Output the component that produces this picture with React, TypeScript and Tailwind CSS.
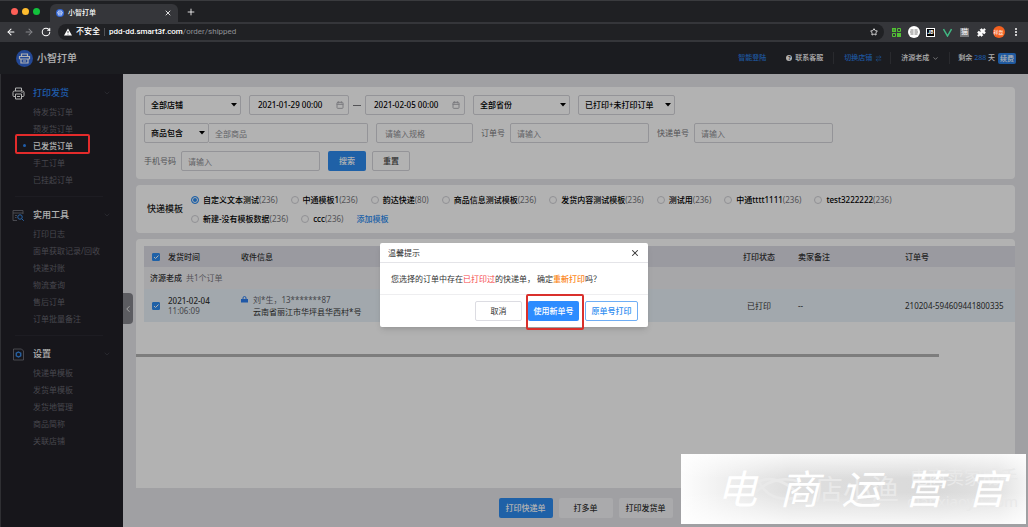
import type { ReactNode } from 'react';
import { ArrowLeft, ArrowRight, Calendar, ChevronDown, ChevronLeft, Plus, Puzzle, RotateCw, Star, X, ArrowRightLeft } from 'lucide-react';

interface MenuGroup {
  title: string;
  icon: ReactNode;
  active?: boolean;
  items: string[];
}

interface SelectBoxProps {
  label: string;
  options: string[];
  className: string;
}

interface TextBoxProps {
  id: string;
  label: string;
  placeholder: string;
  className: string;
}

const PrinterIcon = () => (
  <svg width="13" height="13" viewBox="0 0 26 26" fill="none" stroke="#fff" strokeWidth="2">
    <path d="M7 8V2h12v6M7 19H4a2 2 0 0 1-2-2v-6a3 3 0 0 1 3-3h16a3 3 0 0 1 3 3v6a2 2 0 0 1-2 2h-3" />
    <path d="M7 14h12v10H7zM10 19h6M19 11h2" />
  </svg>
);

const ToolsIcon = () => (
  <svg width="13" height="13" viewBox="0 0 26 26" fill="none" stroke="#7b7b84" strokeWidth="1.6">
    <path d="M10 23H2V3h20v7M2 8h20M6 13h4M6 17h3" />
    <g stroke="#3a90f0" strokeWidth="2">
      <circle cx="16" cy="16" r="4.5" />
      <path d="m19.5 19.5 4 4" />
    </g>
  </svg>
);

const SettingsIcon = () => (
  <svg width="13" height="13" viewBox="0 0 26 26" fill="none" stroke="#7b7b84" strokeWidth="1.6">
    <path d="M3 2h16l4 4v18H3z" />
    <path d="m13 8 4.500 2.500v5L13 18l-4.500-2.500v-5z" stroke="#3a90f0" strokeWidth="2.6" />
  </svg>
);

const Logo = ({ className }: { className: string }) => (
  <svg className={className} viewBox="0 0 34 34">
    <circle cx="17" cy="17" r="17" fill="#3367d6" />
    <g fill="none" stroke="#fff" strokeWidth="2.4">
      <path d="M11 12V8h12v4M7 18v-5h20v5M10 18h14v8H10zM7 18h3M24 18h3M14 22h6" />
    </g>
  </svg>
);

const MENU: MenuGroup[] = [
  { title: '打印发货', icon: <PrinterIcon />, active: true, items: ['待发货订单', '预发货订单', '已发货订单', '手工订单', '已挂起订单'] },
  { title: '实用工具', icon: <ToolsIcon />, items: ['打印日志', '面单获取记录/回收', '快递对账', '物流查询', '售后订单', '订单批量备注'] },
  { title: '设置', icon: <SettingsIcon />, items: ['快递单模板', '发货单模板', '发货地管理', '商品简称', '关联店铺'] },
];

const CURRENT = '已发货订单';

const TEMPLATES = [
  [
    { name: '自定义文本测试', count: 236 },
    { name: '中通模板1', count: 236 },
    { name: '韵达快递', count: 80 },
    { name: '商品信息测试模板', count: 236 },
    { name: '发货内容测试模板', count: 236 },
    { name: '测试用', count: 236 },
    { name: '中通tttt1111', count: 236 },
    { name: 'test3222222', count: 236 },
  ],
  [
    { name: '新建-没有模板数据', count: 236 },
    { name: 'ccc', count: 236 },
  ],
];

const SelectBox = ({ label, options, className }: SelectBoxProps) => (
  <div className={`relative h-5 shrink-0 ${className}`}>
    <select aria-label={label} className="h-full w-full appearance-none rounded-xs border border-[#d4d4da] bg-transparent pl-1.5 font-medium text-black">
      {options.map((option) => (
        <option key={option}>{option}</option>
      ))}
    </select>
    <svg className="pointer-events-none absolute top-2 right-1 h-1 w-1.5" viewBox="0 0 6 4">
      <path d="M0 0h6L3 3.500z" fill="#000" />
    </svg>
  </div>
);

const DateBox = ({ label, value }: { label: string; value: string }) => (
  <div className="flex h-5 w-[100px] shrink-0 items-center rounded-xs border border-[#d4d4da] px-1">
    <input aria-label={label} defaultValue={value} className="w-full min-w-0 bg-transparent pl-1 font-medium text-black outline-none" />
    <Calendar className="size-2 shrink-0 text-[#b0b0b6]" strokeWidth={3} />
  </div>
);

const TextBox = ({ id, label, placeholder, className }: TextBoxProps) => (
  <div className="flex items-center gap-[5px]">
    <label htmlFor={id} className="whitespace-nowrap text-[#77777c]">{label}</label>
    <input id={id} placeholder={placeholder} className={`h-5 rounded-xs border border-[#d4d4da] px-1.5 placeholder:text-[#8e8e94] ${className}`} />
  </div>
);

const BrowserBar = () => (
  <div className="bg-[#1f2023] font-[Roboto,'Noto_Sans_CJK_SC',sans-serif] text-white">
    <div className="flex h-[22px] items-center border-t border-[#3a3b3e] pl-[11px]">
      <div className="flex gap-1">
        <span className="size-[7px] rounded-full bg-[#fe5f57]" />
        <span className="size-[7px] rounded-full bg-[#febc2e]" />
        <span className="size-[7px] rounded-full bg-[#12c23c]" />
      </div>
      <div className="ml-[10px] flex h-[18px] w-32 items-center self-end rounded-t-md bg-[#35363a] px-1.5">
        <Logo className="size-2" />
        <span className="ml-1 flex-1 text-[7px] font-medium">小智打单</span>
        <button aria-label="关闭标签页"><X className="size-2" strokeWidth={2.5} /></button>
      </div>
      <button aria-label="新标签页" className="ml-2"><Plus className="size-2.5" /></button>
    </div>
    <div className="flex h-5 items-center bg-[#35363a] pr-1 pl-1.5">
      <button aria-label="后退"><ArrowLeft className="size-2.5" strokeWidth={2.5} /></button>
      <button aria-label="前进" className="ml-2 text-[#85868a]"><ArrowRight className="size-2.5" strokeWidth={2.5} /></button>
      <button aria-label="刷新" className="ml-[7px]"><RotateCw className="size-2.5" strokeWidth={2.5} /></button>
      <div className="ml-[7px] flex h-4 min-w-0 flex-1 items-center rounded-full bg-[#202124] px-1.5 text-[8px]">
        <svg className="size-2 shrink-0" viewBox="0 0 16 16">
          <path d="M8 1 16 15H0z" fill="#fff" />
          <path d="M8 6v4M8 11.500v1.500" stroke="#202124" strokeWidth="1.600" />
        </svg>
        <span className="ml-1 border-r border-[#505155] pr-1 leading-[8px] font-medium whitespace-nowrap">不安全</span>
        <span className="ml-1 flex-1 truncate text-[#8f9094]"><span className="font-medium text-white">pdd-dd.smart3f.com</span>/order/shipped</span>
        <button aria-label="收藏"><Star className="size-2" strokeWidth={2.5} /></button>
      </div>
      <div className="ml-1 grid auto-cols-[17px] grid-flow-col items-center justify-items-center">
        <svg className="size-[9px]" viewBox="0 0 18 18">
          <path d="M0 0h8v8H0zM10 10h8v8h-8z" fill="#52c234" />
          <path d="M11 1h6v6h-6zM1 11h6v6H1z" fill="none" stroke="#52c234" strokeWidth="2" />
          <path d="M3 3h2v2H3z" fill="#1f2023" />
        </svg>
        <svg className="size-3" viewBox="0 0 24 24">
          <circle cx="12" cy="12" r="12" fill="#fff" />
          <path d="M5 8h6M13 8h6M4 12h7M13 12h7M5 16h6M13 16h6" stroke="#555" strokeWidth="1.600" />
        </svg>
        <span className="flex size-[9px] items-start justify-center border border-white bg-black text-[5px] leading-[6px] font-bold">JB</span>
        <svg className="size-[9px]" viewBox="0 0 18 18">
          <path d="m1 2 8 14 8-14" fill="none" stroke="#41b883" strokeWidth="3" />
        </svg>
        <span className="flex size-[9px] items-center justify-center bg-[#77787b] text-[7px] leading-[9px]">猫</span>
        <Puzzle className="size-[9px]" fill="#fff" />
        <span className="flex size-3 items-center justify-center rounded-full bg-[#f4601f] text-[5px] leading-[12px]">祥磊</span>
        <svg className="size-2" viewBox="0 0 8 8" fill="#fff">
          <circle cx="4" cy="1" r="1" />
          <circle cx="4" cy="4" r="1" />
          <circle cx="4" cy="7" r="1" />
        </svg>
      </div>
    </div>
  </div>
);

const Header = () => (
  <header className="flex h-8 items-center bg-[#28292f] pr-3 pl-4 text-white">
    <Logo className="size-[17px]" />
    <h1 className="ml-1 text-[10px] font-medium">小智打单</h1>
    <nav className="ml-auto flex items-center text-[7px] font-medium whitespace-nowrap">
      <a href="#login" className="text-[#2b7de0]">智能登陆</a>
      <a href="#service" className="ml-5 flex items-center gap-[3px]">
        <span className="flex size-1.5 items-center justify-center rounded-full bg-white text-[5px] leading-[6px] font-bold text-[#28292f]">?</span>
        联系客服
      </a>
      <a href="#shops" className="ml-2.5 flex items-center gap-[3px] border-l border-[#3c3d43] pl-2.5 text-[#2b7de0]">
        切换店铺
        <ArrowRightLeft className="size-[7px]" />
      </a>
      <button className="ml-2 flex items-center gap-[3px] border-l border-[#3c3d43] pl-2.5">
        济源老成
        <ChevronDown className="size-[7px]" />
      </button>
      <span className="ml-2.5 border-l border-[#3c3d43] pl-2">剩余 <span className="text-[#2b7de0]">288</span> 天</span>
      <button className="ml-[3px] h-[11px] rounded-xs bg-[#2c80e4] px-[2px] leading-[11px]">续费</button>
    </nav>
  </header>
);

const Sidebar = () => (
  <aside className="relative w-[123px] shrink-0 border-l border-[#44444a] bg-[#212027] pt-[9px]">
    {MENU.map((group, index) => (
      <section key={group.title}>
        {index > 0 && <hr className="my-2 ml-3.5 w-22 border-[#2a2932]" />}
        <h2 className="flex h-5 items-center pr-3 pl-[11px] text-[9px] font-medium text-white">
          {group.icon}
          <span className={`ml-2 flex-1 ${group.active ? 'text-[#2d86f5]' : ''}`}>{group.title}</span>
          <ChevronDown className="size-2 text-[#46454f]" />
        </h2>
        <ul>
          {group.items.map((item) => (
            <li key={item} className="relative flex h-[17px] items-center pl-8">
              {item === CURRENT && (
                <>
                  <span className="absolute left-[22px] size-[3px] rounded-full bg-[#2d86f5]" />
                  <span className="absolute -top-[3px] left-[14px] z-20 h-5 w-[75px] rounded-xs border-2 border-[#e32b2b]" />
                </>
              )}
              <a href="#menu" className={item === CURRENT ? 'font-medium text-white' : 'text-[#67666f]'}>{item}</a>
            </li>
          ))}
        </ul>
      </section>
    ))}
    <button aria-label="收起菜单" className="absolute top-[219px] left-full flex h-[31px] w-2.5 items-center justify-center rounded-r-sm bg-[#85858c] text-white">
      <ChevronLeft className="size-2.5" />
    </button>
  </aside>
);

const Filters = () => (
  <form className="flex flex-col gap-2 rounded-sm bg-white p-2" onSubmit={(e) => e.preventDefault()}>
    <div className="flex items-center gap-2">
      <SelectBox label="店铺" options={['全部店铺']} className="w-[97px]" />
      <div className="flex items-center gap-1">
        <DateBox label="开始时间" value="2021-01-29 00:00" />
        <span className="h-px w-2 bg-[#77777c]" />
        <DateBox label="结束时间" value="2021-02-05 00:00" />
      </div>
      <SelectBox label="省份" options={['全部省份']} className="w-[97px]" />
      <SelectBox label="打印状态" options={['已打印+未打印订单']} className="w-[97px]" />
    </div>
    <div className="flex items-center gap-2">
      <div className="flex">
        <SelectBox label="商品条件" options={['商品包含']} className="w-[65px]" />
        <input aria-label="商品" placeholder="全部商品" className="h-5 w-[159px] rounded-r-xs border border-l-0 border-[#d4d4da] px-1.5 placeholder:text-[#8e8e94]" />
      </div>
      <input aria-label="规格" placeholder="请输入规格" className="h-5 w-[97px] rounded-xs border border-[#d4d4da] px-2 placeholder:text-[#8e8e94]" />
      <TextBox id="order" label="订单号" placeholder="请输入" className="w-[139px]" />
      <TextBox id="express" label="快递单号" placeholder="请输入" className="w-[139px]" />
    </div>
    <div className="flex items-center gap-2">
      <TextBox id="phone" label="手机号码" placeholder="请输入" className="w-[139px]" />
      <div className="flex gap-1.5">
        <button className="h-5 w-[38px] rounded-xs bg-[#2d8cf0] font-medium text-white">搜索</button>
        <button type="reset" className="h-5 w-[38px] rounded-xs border border-[#d4d4da] font-medium text-[#444]">重置</button>
      </div>
    </div>
  </form>
);

const Templates = () => (
  <div role="radiogroup" aria-labelledby="template-title" className="flex h-12 items-center rounded-sm bg-white pl-[11px]">
    <span id="template-title" className="w-11 shrink-0 text-[9px] font-medium whitespace-nowrap text-[#222]">快递模板</span>
    <div className="flex flex-col gap-[7px]">
      {TEMPLATES.map((row, index) => (
        <div key={index} className="flex h-3 items-center gap-[13px] whitespace-nowrap">
          {row.map(({ name, count }) => (
            <label key={name} className="flex items-center gap-1">
              <input
                type="radio"
                name="template"
                defaultChecked={name === '自定义文本测试'}
                className="size-2 appearance-none rounded-full border border-[#d0d0d6] checked:border-[#2d8cf0] checked:bg-[#2d8cf0] checked:shadow-[inset_0_0_0_1px_#fff]"
              />
              <span className="text-[#77777c]"><span className="font-medium text-black">{name}</span>({count})</span>
            </label>
          ))}
          {index === 1 && <a href="#add" className="font-medium text-[#2d8cf0]">添加模板</a>}
        </div>
      ))}
    </div>
  </div>
);

const CheckBox = ({ label }: { label: string }) => (
  <span className="relative mx-auto block size-2">
    <input type="checkbox" aria-label={label} defaultChecked className="block size-2 appearance-none rounded-[1px] border border-[#c4c4ca] checked:border-[#2d8cf0] checked:bg-[#2d8cf0]" />
    <svg className="pointer-events-none absolute inset-0 size-2" viewBox="0 0 8 8">
      <path d="m2 4 1.500 1.500L6.500 2.500" fill="none" stroke="#fff" />
    </svg>
  </span>
);

const Orders = () => (
  <div className="flex-1 rounded-t-sm bg-white pt-[7px]">
    <div className="pl-2">
      <table className="w-full table-fixed text-left text-[#333]">
        <colgroup>
          <col className="w-6" />
          <col className="w-[73px]" />
          <col />
          <col className="w-[54px]" />
          <col className="w-[119px]" />
          <col className="w-[110px]" />
        </colgroup>
        <thead>
          <tr className="h-[21px] bg-[#dddde6]">
            <th><CheckBox label="全选" /></th>
            <th className="font-medium">发货时间</th>
            <th className="font-medium">收件信息</th>
            <th className="text-center font-medium">打印状态</th>
            <th className="pl-3 font-medium">卖家备注</th>
            <th className="font-medium">订单号</th>
          </tr>
        </thead>
        <tbody>
          <tr className="h-[22px] bg-[#efeff3]">
            <td colSpan={6} className="pl-1.5 text-[#77777c]"><span className="mr-1 font-medium text-[#333]">济源老成</span>共1个订单</td>
          </tr>
          <tr className="h-[33px] bg-[#e8f1f8]">
            <td><CheckBox label="选择订单" /></td>
            <td className="leading-[10px]">
              <div className="font-medium">2021-02-04</div>
              <div className="text-[#66666c]">11:06:09</div>
            </td>
            <td>
              <div className="flex gap-[5px] leading-[12px]">
                <svg className="mt-[2px] size-[7px]" viewBox="0 0 14 14">
                  <path d="M0 6h14v7H0z" fill="#2d7ff0" />
                  <path d="M4 6V4a3 3 0 0 1 6 0v2" fill="none" stroke="#2d7ff0" strokeWidth="2" />
                </svg>
                <div>
                  <div className="text-[#66666c]">刘*生，13*******87</div>
                  <div>云南省丽江市华坪县华西村*号</div>
                </div>
              </div>
            </td>
            <td className="text-center">已打印</td>
            <td className="pl-3">--</td>
            <td>210204-594609441800335</td>
          </tr>
        </tbody>
      </table>
    </div>
    <div className="mt-8 mr-[76px] h-[3px] bg-[#b4b4b4]" />
  </div>
);

const PrintDialog = () => (
  <div className="absolute inset-0 z-10 flex items-start justify-center bg-black/30 pt-[201px]">
    <div role="dialog" aria-labelledby="dialog-title" className="w-[268px] rounded-xs bg-white text-[#333] shadow-md">
      <div className="flex h-5 items-center justify-between border-b border-[#e4e4e8] px-2">
        <h2 id="dialog-title">温馨提示</h2>
        <button aria-label="关闭"><X className="size-2.5" strokeWidth={2.5} /></button>
      </div>
      <p className="flex h-8 items-center border-b border-[#eeeef0] pl-[11px] whitespace-pre">
        您选择的订单中存在<span className="text-[#f5464a]">已打印过</span>的快递单， 确定<span className="font-medium text-[#fb8620]">重新打印</span>吗？
      </p>
      <div className="flex h-8 items-center justify-end gap-1.5 pr-2.5">
        <button className="h-5 w-[47px] rounded-xs border border-[#dcdce2]">取消</button>
        <span className="relative flex">
          <button className="h-5 w-[51px] rounded-xs bg-[#2d8cff] font-medium text-white">使用新单号</button>
          <span className="pointer-events-none absolute -top-[7px] -right-[5px] -bottom-[9px] -left-[2px] rounded-xs border-2 border-[#d9302c]" />
        </span>
        <button className="h-5 w-[53px] rounded-xs border border-[#6faef5] font-medium text-[#2d8cf0]">原单号打印</button>
      </div>
    </div>
  </div>
);

const Watermark = () => (
  <div className="absolute right-[2px] bottom-[3px] z-30 h-[70px] w-[345px] overflow-hidden bg-[linear-gradient(to_right,#fdfdfd_0%,#f0f0f0_12%,#dedede_32%,#dadada_75%,#e2e2e2_92%,#f4f4f4_100%)]">
    <div className="absolute inset-0 bg-[linear-gradient(to_bottom,#fffc_0%,#fff0_35%,#fff0_55%,#fffc_100%)]" />
    <div className="absolute inset-0 flex items-center justify-end gap-2 pr-2 text-[#e9e9e9]">
      <svg className="h-7 w-14" viewBox="0 0 64 32" fill="none" stroke="currentColor" strokeWidth="3">
        <path d="M2 12C16 0 36 2 56 24C36 32 18 26 8 6M2 24c12-16 34-24 54-16" />
      </svg>
      <span className="text-[28px] leading-[32px] whitespace-nowrap">店小渔</span>
      <div className="text-right whitespace-nowrap">
        <div className="text-[18px] leading-[24px]">电商卖家助手</div>
        <div className="text-[15px] leading-[24px]">dianxiaoyu.com</div>
      </div>
    </div>
    <div className="absolute inset-0 flex items-center justify-between pr-5 pl-9 text-[40px] leading-[44px] text-white italic">
      {['电', '商', '运', '营', '官'].map((char) => (
        <span key={char}>{char}</span>
      ))}
    </div>
  </div>
);

const App: React.FC = () => (
  <div className="relative flex min-h-screen flex-col bg-[#1f2023] font-['Noto_Sans','Noto_Sans_CJK_SC',sans-serif] text-[8px] leading-[12px]">
    <BrowserBar />
    <div className="relative flex flex-1 flex-col">
      <Header />
      <div className="flex flex-1">
        <Sidebar />
        <main className="flex min-w-0 flex-1 flex-col bg-[#e5e5ea] px-[13px] pt-[13px]">
          <div className="flex flex-1 flex-col gap-[6px]">
            <Filters />
            <Templates />
            <Orders />
          </div>
          <div className="flex justify-center gap-1.5 pt-2.5 pb-[9px] pl-5 font-medium">
            <button className="h-5 w-[54px] rounded-xs bg-[#2d8cf0] text-white">打印快递单</button>
            <button className="h-5 w-[54px] rounded-xs bg-[#f4f4f6] text-[#333]">打多单</button>
            <button className="h-5 w-[54px] rounded-xs bg-[#f4f4f6] text-[#333]">打印发货单</button>
          </div>
        </main>
      </div>
      <PrintDialog />
    </div>
    <Watermark />
  </div>
);

export default App;
